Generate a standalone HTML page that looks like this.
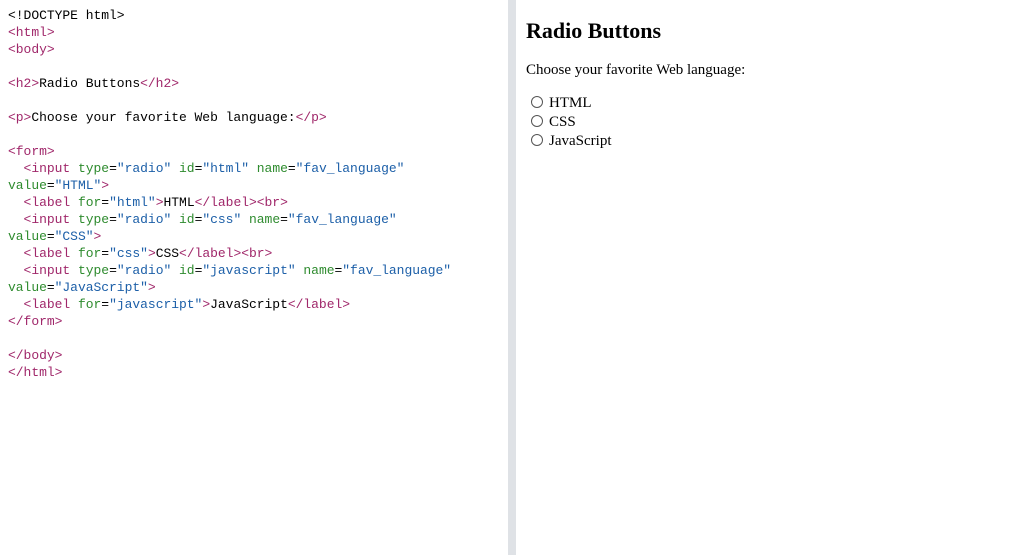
<!DOCTYPE html>
<html><head><style>
body{margin:0;width:1024px;height:555px;background:#fff;position:relative;overflow:hidden}
#code{position:absolute;left:8px;top:7px;font-family:"Liberation Mono",monospace;font-size:13px;line-height:17px;white-space:pre;color:#000;letter-spacing:-0.03px}
.t{color:#a0276a}.a{color:#2e8b2e}.v{color:#1c5fa8}
#div{position:absolute;left:508px;top:0;width:8px;height:555px;background:#dfe2e6}
#r{position:absolute;left:526px;top:0;font-family:"Liberation Serif",serif;color:#000}
h2{font-size:22px;margin:0;position:absolute;top:18px;white-space:nowrap}
p{font-size:15px;margin:0;position:absolute;top:62px;white-space:nowrap}
.rb{position:absolute;left:5px;font-size:15px;white-space:nowrap}
.rb i{display:inline-block;width:10px;height:10px;border:1px solid #555;border-radius:50%;margin-right:6px;vertical-align:-1px}
</style></head><body>
<div id="code">&lt;!DOCTYPE html&gt;
<span class="t">&lt;html&gt;</span>
<span class="t">&lt;body&gt;</span>

<span class="t">&lt;h2&gt;</span>Radio Buttons<span class="t">&lt;/h2&gt;</span>

<span class="t">&lt;p&gt;</span>Choose your favorite Web language:<span class="t">&lt;/p&gt;</span>

<span class="t">&lt;form&gt;</span>
  <span class="t">&lt;input</span> <span class="a">type</span>=<span class="v">"radio"</span> <span class="a">id</span>=<span class="v">"html"</span> <span class="a">name</span>=<span class="v">"fav_language"</span>
<span class="a">value</span>=<span class="v">"HTML"</span><span class="t">&gt;</span>
  <span class="t">&lt;label</span> <span class="a">for</span>=<span class="v">"html"</span><span class="t">&gt;</span>HTML<span class="t">&lt;/label&gt;&lt;br&gt;</span>
  <span class="t">&lt;input</span> <span class="a">type</span>=<span class="v">"radio"</span> <span class="a">id</span>=<span class="v">"css"</span> <span class="a">name</span>=<span class="v">"fav_language"</span>
<span class="a">value</span>=<span class="v">"CSS"</span><span class="t">&gt;</span>
  <span class="t">&lt;label</span> <span class="a">for</span>=<span class="v">"css"</span><span class="t">&gt;</span>CSS<span class="t">&lt;/label&gt;&lt;br&gt;</span>
  <span class="t">&lt;input</span> <span class="a">type</span>=<span class="v">"radio"</span> <span class="a">id</span>=<span class="v">"javascript"</span> <span class="a">name</span>=<span class="v">"fav_language"</span>
<span class="a">value</span>=<span class="v">"JavaScript"</span><span class="t">&gt;</span>
  <span class="t">&lt;label</span> <span class="a">for</span>=<span class="v">"javascript"</span><span class="t">&gt;</span>JavaScript<span class="t">&lt;/label&gt;</span>
<span class="t">&lt;/form&gt;</span>

<span class="t">&lt;/body&gt;</span>
<span class="t">&lt;/html&gt;</span></div>
<div id="div"></div>
<div id="r">
<h2>Radio Buttons</h2>
<p>Choose your favorite Web language:</p>
<div class="rb" style="top:95px"><i></i>HTML</div>
<div class="rb" style="top:114px"><i></i>CSS</div>
<div class="rb" style="top:133px"><i></i>JavaScript</div>
</div>
</body></html>
